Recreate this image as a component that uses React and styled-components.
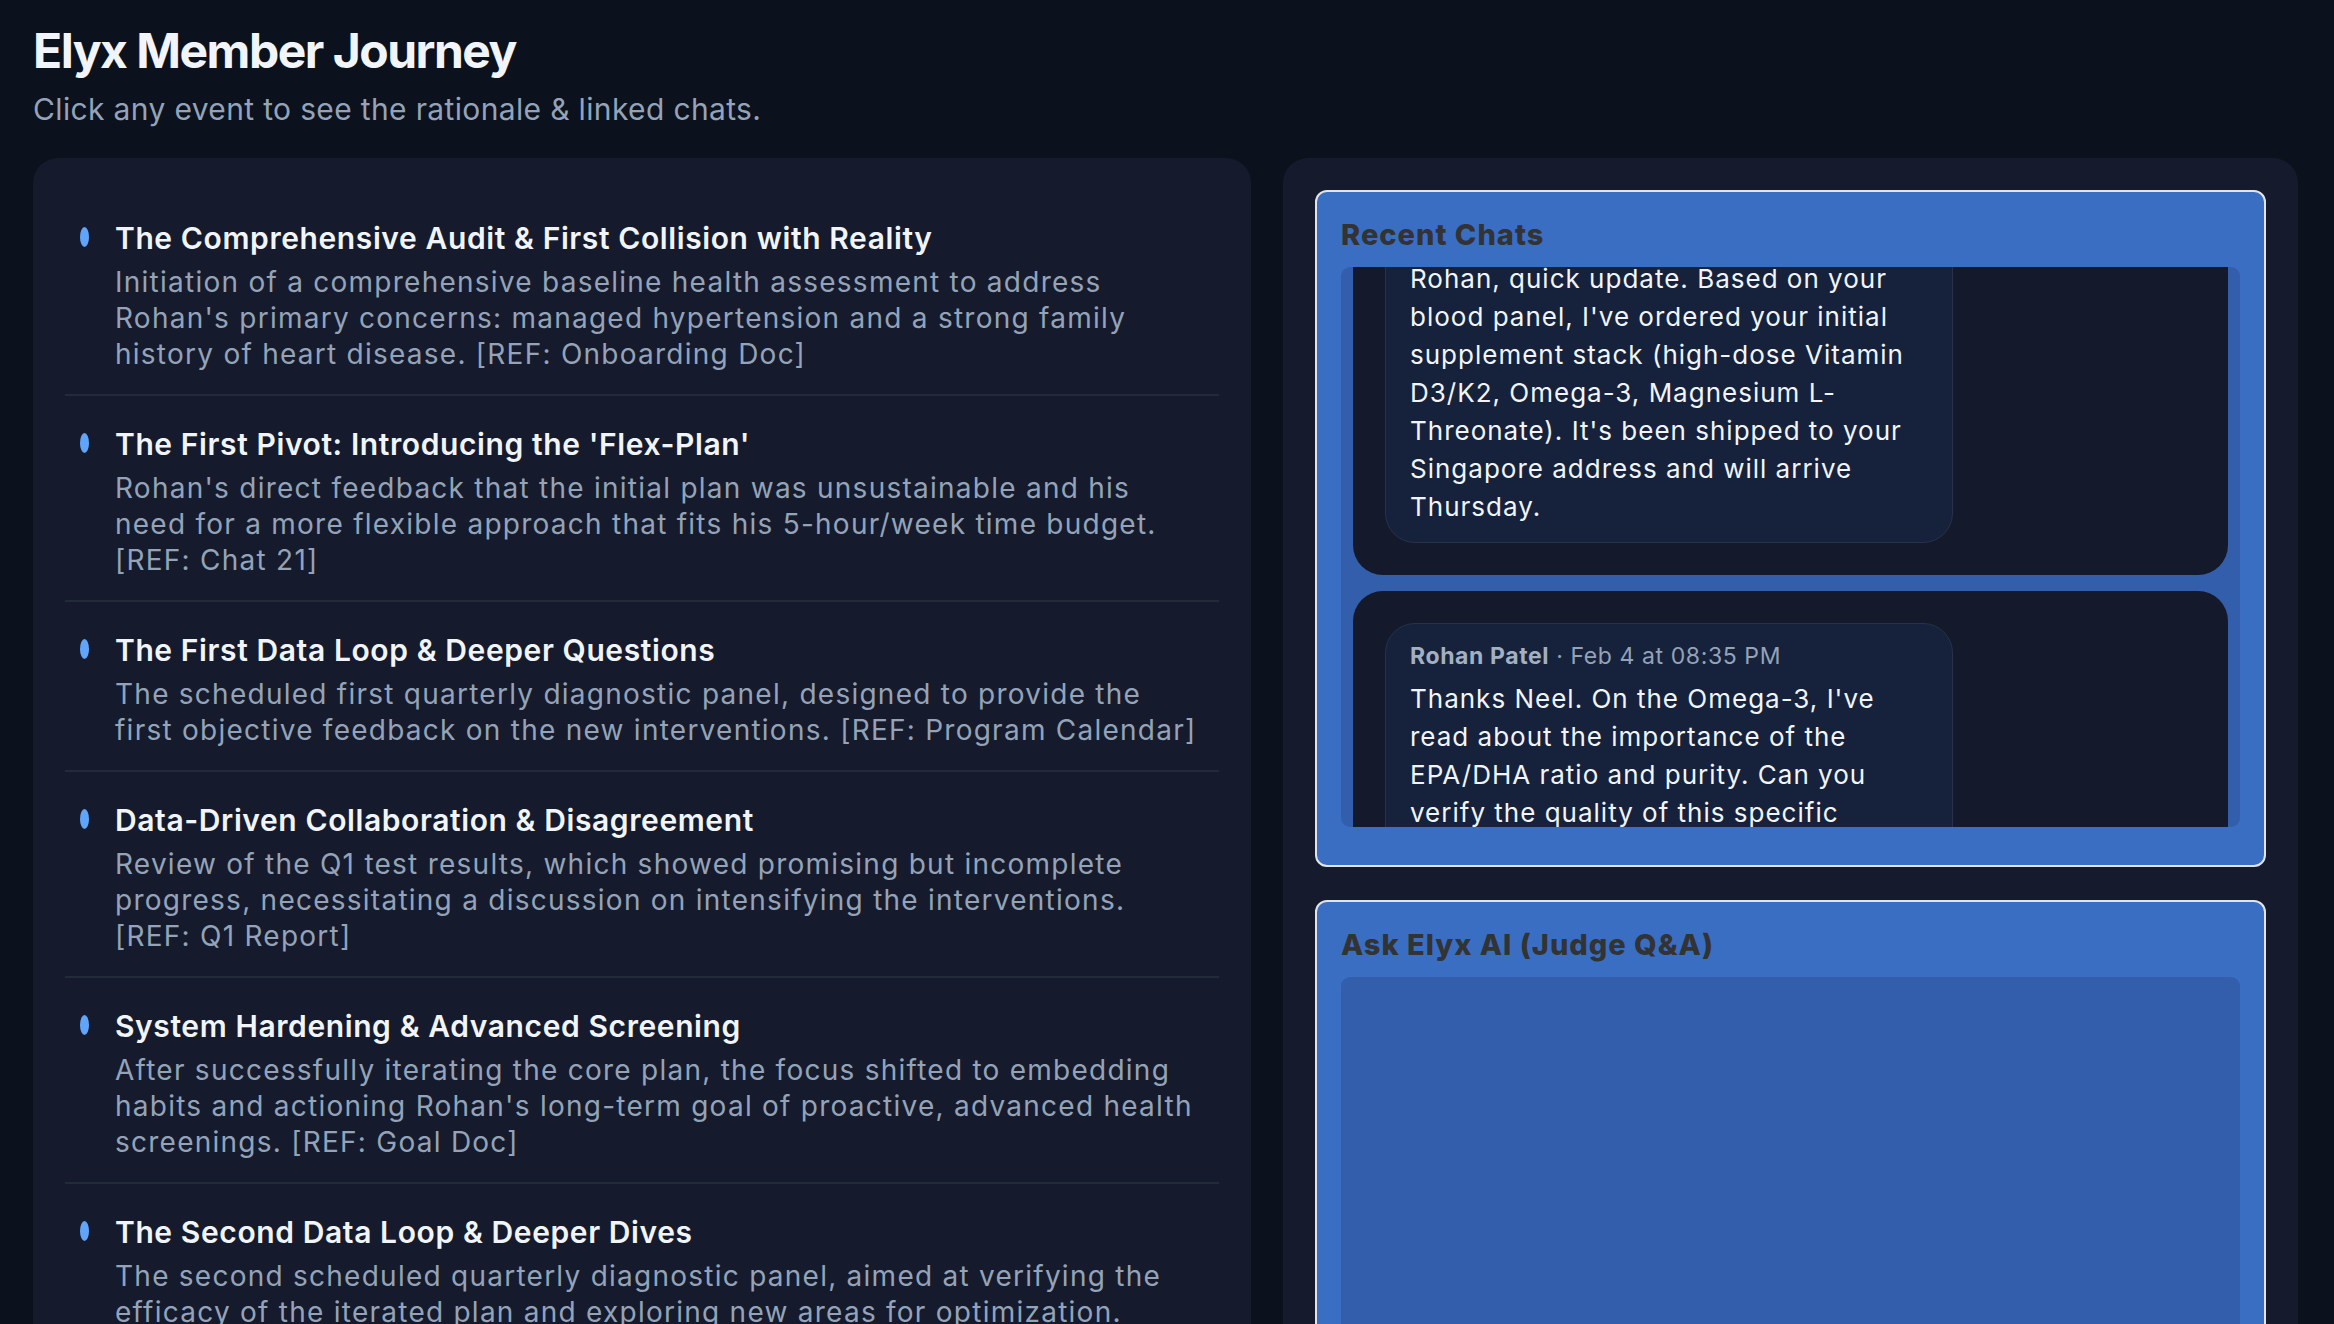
import React, { useLayoutEffect, useRef } from 'react';
import styled, { createGlobalStyle } from 'styled-components';

const GlobalStyle = createGlobalStyle`
  html, body {
    margin: 0;
    padding: 0;
    background: #0b111d;
  }
  body {
    font-family: Inter, 'Noto Sans', 'Liberation Sans', sans-serif;
    color: #f1f5f9;
    -webkit-font-smoothing: antialiased;
  }
  * {
    box-sizing: border-box;
  }
`;

const events = [
  {
    title: 'The Comprehensive Audit & First Collision with Reality',
    desc: "Initiation of a comprehensive baseline health assessment to address Rohan's primary concerns: managed hypertension and a strong family history of heart disease. [REF: Onboarding Doc]",
  },
  {
    title: "The First Pivot: Introducing the 'Flex-Plan'",
    desc: "Rohan's direct feedback that the initial plan was unsustainable and his need for a more flexible approach that fits his 5-hour/week time budget. [REF: Chat 21]",
  },
  {
    title: 'The First Data Loop & Deeper Questions',
    desc: 'The scheduled first quarterly diagnostic panel, designed to provide the first objective feedback on the new interventions. [REF: Program Calendar]',
  },
  {
    title: 'Data-Driven Collaboration & Disagreement',
    desc: 'Review of the Q1 test results, which showed promising but incomplete progress, necessitating a discussion on intensifying the interventions. [REF: Q1 Report]',
  },
  {
    title: 'System Hardening & Advanced Screening',
    desc: "After successfully iterating the core plan, the focus shifted to embedding habits and actioning Rohan's long-term goal of proactive, advanced health screenings. [REF: Goal Doc]",
  },
  {
    title: 'The Second Data Loop & Deeper Dives',
    desc: 'The second scheduled quarterly diagnostic panel, aimed at verifying the efficacy of the iterated plan and exploring new areas for optimization. [REF: Q2 Report]',
  },
  {
    title: 'Travel Resilience & Routine Maintenance',
    desc: 'Adapting the plan around business travel across time zones while keeping sleep, exercise and nutrition on track. [REF: Travel Log]',
  },
];

const chats = [
  {
    name: 'Neel',
    time: 'Feb 4 at 06:10 PM',
    text: "Rohan, quick update. Based on your blood panel, I've ordered your initial supplement stack (high-dose Vitamin D3/K2, Omega-3, Magnesium L-Threonate). It's been shipped to your Singapore address and will arrive Thursday.",
  },
  {
    name: 'Rohan Patel',
    time: 'Feb 4 at 08:35 PM',
    text: "Thanks Neel. On the Omega-3, I've read about the importance of the EPA/DHA ratio and purity. Can you verify the quality of this specific supplement before I start taking it?",
  },
  {
    name: 'Neel',
    time: 'Feb 5 at 09:02 AM',
    text: "Good question. It's third-party tested for heavy metals and oxidation, with a 2:1 EPA/DHA ratio. I'll send the certificate over.",
  },
];

const Page = styled.div`
  padding: 22px 36px 0 33px;
  min-height: 100vh;
  background: #0b111d;
`;

const Header = styled.header`
  display: flex;
  flex-direction: column;
  gap: 9px;
  margin-bottom: 29px;
`;

const Title = styled.h1`
  margin: 0;
  font-size: 48px;
  line-height: 58px;
  font-weight: 700;
  letter-spacing: -1.5px;
  color: #f1f5f9;
`;

const Subtitle = styled.p`
  margin: 0;
  font-size: 30px;
  line-height: 40px;
  letter-spacing: 0.35px;
  color: #94a3b8;
`;

const Columns = styled.main`
  display: grid;
  grid-template-columns: 1.2fr 1fr;
  gap: 32px;
  align-items: start;
`;

const Panel = styled.section`
  background: #151b2c;
  border-radius: 25px;
  padding: 32px;
  display: flex;
  flex-direction: column;
  gap: ${p => p.gap || 0}px;
`;

const EventItem = styled.div`
  display: flex;
  gap: 26px;
  padding: 28px 15px 22px 15px;
  border-bottom: 2px solid #232a3a;
  cursor: pointer;
`;

const Dot = styled.span`
  flex: none;
  width: 9px;
  height: 20px;
  margin-top: 9px;
  border-radius: 50%;
  background: #60a5fa;
`;

const EventBody = styled.div`
  display: flex;
  flex-direction: column;
  gap: 6px;
  min-width: 0;
`;

const EventTitle = styled.h3`
  margin: 0;
  font-size: 30px;
  line-height: 40px;
  font-weight: 600;
  letter-spacing: 0.6px;
  color: #f1f5f9;
`;

const EventDesc = styled.p`
  margin: 0;
  font-size: 28px;
  line-height: 36px;
  letter-spacing: 1.25px;
  color: #94a3b8;
`;

const Card = styled.div`
  background: #3a6ec3;
  border: 2px solid #e2e4e8;
  border-radius: 12px;
  padding: 24px 24px 38px;
  display: flex;
  flex-direction: column;
  gap: 15px;
`;

const CardTitle = styled.h2`
  margin: 2px 0 0;
  font-size: 29px;
  line-height: 34px;
  font-weight: 800;
  letter-spacing: 1px;
  color: #333333;
`;

const Well = styled.div`
  height: 560px;
  background: #335eac;
  border-radius: 9px;
  padding: 12px;
  display: flex;
  flex-direction: column;
  gap: 16px;
  overflow-y: auto;
  scrollbar-width: none;

  &::-webkit-scrollbar {
    display: none;
  }
`;

const MessageCard = styled.div`
  flex: none;
  background: #141a2b;
  border-radius: 30px;
  padding: 32px;
`;

const Bubble = styled.div`
  max-width: 70%;
  background: #16223b;
  border: 1px solid #26324b;
  border-radius: 30px;
  padding: 16px 24px;
  display: flex;
  flex-direction: column;
  gap: 8px;
`;

const Meta = styled.div`
  font-size: 23px;
  line-height: 32px;
  letter-spacing: 0.6px;
  color: #94a3b8;

  & > b {
    font-weight: 700;
    color: #a3b0c2;
  }
`;

const MessageText = styled.p`
  margin: 0;
  font-size: 26px;
  line-height: 38px;
  letter-spacing: 1px;
  color: #f1f5f9;
`;

function RecentChats() {
  const wellRef = useRef(null);

  useLayoutEffect(() => {
    if (wellRef.current) wellRef.current.scrollTop = 108;
  }, []);

  return (
    <Card>
      <CardTitle>Recent Chats</CardTitle>
      <Well ref={wellRef}>
        {chats.map((c, i) => (
          <MessageCard key={i}>
            <Bubble>
              <Meta>
                <b>{c.name}</b> · {c.time}
              </Meta>
              <MessageText>{c.text}</MessageText>
            </Bubble>
          </MessageCard>
        ))}
      </Well>
    </Card>
  );
}

export default function App() {
  return (
    <>
      <GlobalStyle />
      <Page>
        <Header>
          <Title>Elyx Member Journey</Title>
          <Subtitle>Click any event to see the rationale &amp; linked chats.</Subtitle>
        </Header>
        <Columns>
          <Panel>
            {events.map((e, i) => (
              <EventItem key={i}>
                <Dot />
                <EventBody>
                  <EventTitle>{e.title}</EventTitle>
                  <EventDesc>{e.desc}</EventDesc>
                </EventBody>
              </EventItem>
            ))}
          </Panel>
          <Panel gap={33}>
            <RecentChats />
            <Card>
              <CardTitle>Ask Elyx AI (Judge Q&amp;A)</CardTitle>
              <Well />
            </Card>
          </Panel>
        </Columns>
      </Page>
    </>
  );
}
